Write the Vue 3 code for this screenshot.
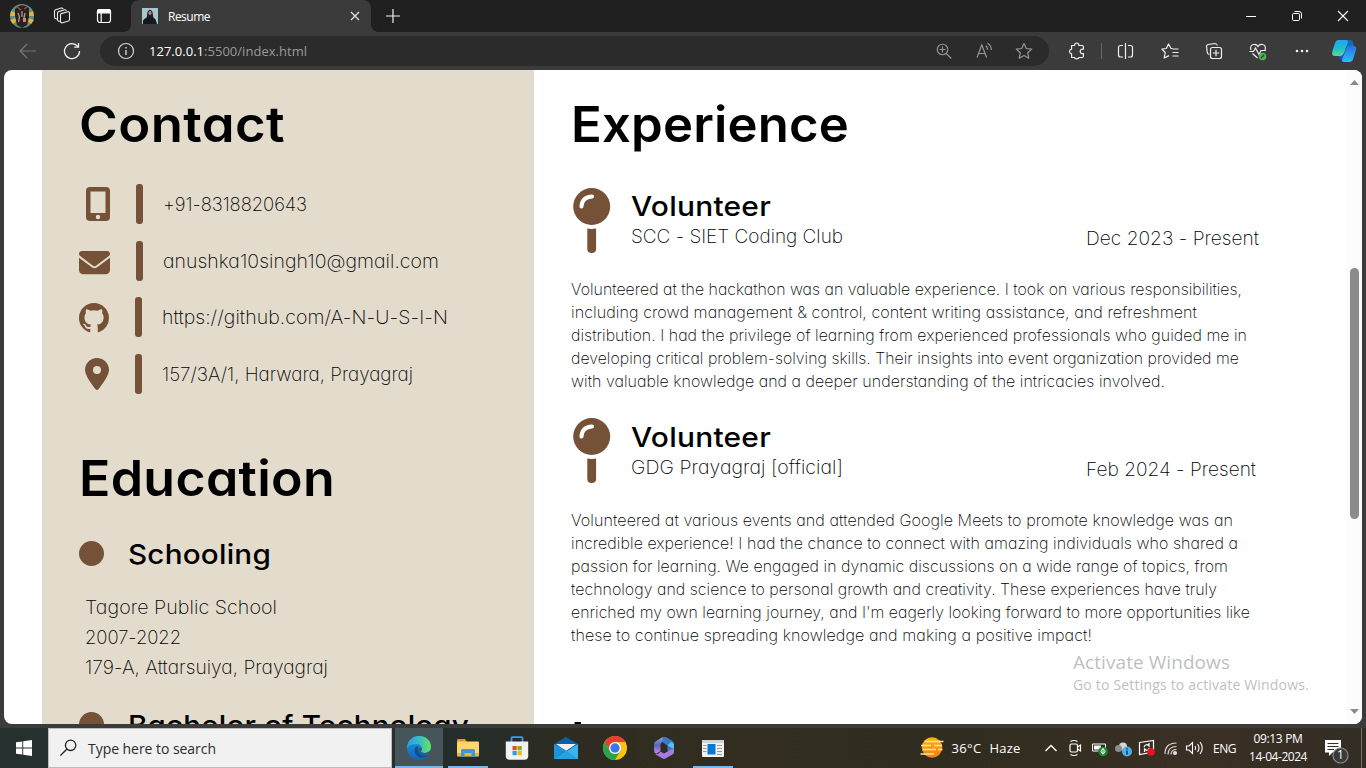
<script setup>
// Spreads the letters of a single line so that it fills the given width.
const vFit = {
  mounted(el, { value }) {
    const natural = el.getBoundingClientRect().width
    el.style.letterSpacing = (value - natural) / el.textContent.length + 'px'
  }
}

// Widens the letter shapes of a single line, with a little tracking, to the given width.
const vWiden = {
  mounted(el, { value }) {
    const natural = el.getBoundingClientRect().width
    const tracked = natural + (value - natural) * 0.15
    el.style.letterSpacing = (tracked - natural) / el.textContent.length + 'px'
    el.style.transform = `scaleX(${value / tracked})`
  }
}

const school = [
  ['Tagore Public School', 192],
  ['2007-2022', 96],
  ['179-A, Attarsuiya, Prayagraj', 243]
]

const jobs = [
  {
    org: 'SCC - SIET Coding Club',
    date: 'Dec 2023 - Present',
    dateWidth: 173,
    lines: [
      ['Volunteered at the hackathon was an valuable experience. I took on various responsibilities,', 671],
      ['including crowd management & control, content writing assistance, and refreshment', 626],
      ['distribution. I had the privilege of learning from experienced professionals who guided me in', 676],
      ['developing critical problem-solving skills. Their insights into event organization provided me', 668],
      ['with valuable knowledge and a deeper understanding of the intricacies involved.', 594]
    ]
  },
  {
    org: 'GDG Prayagraj [official]',
    date: 'Feb 2024 - Present',
    dateWidth: 170,
    lines: [
      ['Volunteered at various events and attended Google Meets to promote knowledge was an', 662],
      ['incredible experience! I had the chance to connect with amazing individuals who shared a', 667],
      ['passion for learning. We engaged in dynamic discussions on a wide range of topics, from', 657],
      ['technology and science to personal growth and creativity. These experiences have truly', 646],
      ['enriched my own learning journey, and I\'m eagerly looking forward to more opportunities like', 679],
      ['these to continue spreading knowledge and making a positive impact!', 521]
    ]
  }
]
</script>

<template>
  <div class="desktop">
    <header class="tabs">
      <svg class="avatar" width="24" height="24" viewBox="0 0 24 24">
        <circle cx="12" cy="12" r="12" fill="#5f8f86" />
        <path d="M12 12L1 7 0 12ZM12 12L0 16 3 20ZM12 12L23 7 24 12ZM12 12L24 16 21 20Z" fill="#dfb53c" />
        <path d="M5 5Q12-2 19 4L19 13 17 21 12 24 7 21 5 12Z" fill="#2a211f" />
        <path d="M7 3l4 3M17 3l-3 2" stroke="#a8463c" stroke-width="1.500" />
        <path d="M8 9l1.500 4-1 5M12 7v6M15 9l-1 5" stroke="#a79b98" stroke-width="1.300" fill="none" />
        <path d="M13 14h3v4h-3z" fill="#c98a88" />
      </svg>
      <svg class="t-spaces" width="18" height="18" viewBox="0 0 18 18" fill="none" stroke="#e8e8e8" stroke-width="1.1">
        <path d="M8.200 6.600L14.900 4.800Q16.500 4.500 16.500 6V12.500Q16.500 13.600 15.400 14L9.600 15.800Q7.800 16.200 7.500 14.600V8Q7.500 6.900 8.200 6.600Z" />
        <path d="M7.400 14.200Q4.600 14.600 4.500 12.500V6.200Q4.500 5 5.600 4.600L11.600 2.800Q13 2.500 13.400 4" />
        <path d="M4.600 11.900Q1.600 12.200 1.500 10V4.500Q1.500 3.200 2.700 2.800L8 1.100Q9.600.7 10.200 2" />
      </svg>
      <svg class="t-vert" width="16" height="16" viewBox="0 0 16 16" fill="none" stroke="#fff" stroke-width="1.200">
        <rect x="1.500" y="1.500" width="13" height="13" rx="2.500" />
        <path d="M1.500 3.500Q1.500 1.500 3.500 1.500H12.500Q14.500 1.500 14.500 3.500V5H1.500Z" fill="#fff" />
        <path d="M5.200 5V14.500" />
      </svg>
      <div class="tab">
        <svg width="16" height="16" viewBox="0 0 16 16">
          <rect width="16" height="16" fill="#a9c6d0" />
          <path d="M5.500 4Q8-.5 10.500 4L11.500 11H4.500Z" fill="#241d20" />
          <path d="M1 16V12.500Q4 9 6 9H10Q14 10 15 16Z" fill="#17191d" />
          <ellipse cx="8" cy="5" rx="1.500" ry="2" fill="#b98f84" />
        </svg>
        <span class="tab-title"><span v-fit="42" class="fit">Resume</span></span>
        <svg class="tab-x" width="10" height="10" viewBox="0 0 10 10" stroke="#e6e6e6" stroke-width="1.200"><path d="M1 1l8 8M9 1L1 9" /></svg>
      </div>
      <svg class="plus" width="14" height="14" viewBox="0 0 14 14" stroke="#f2f2f2" stroke-width="1.200"><path d="M7 0v14M0 7h14" /></svg>
      <div class="win">
        <svg width="46" height="32" viewBox="0 0 46 32" stroke="#fff"><path d="M18 16.500h10" /></svg>
        <svg width="46" height="32" viewBox="0 0 46 32" fill="none" stroke="#fff"><rect x="18.500" y="13.500" width="7" height="7" rx="1.200" /><path d="M20.500 11.500H25Q27.500 11.500 27.500 14V18.500" /></svg>
        <svg width="46" height="32" viewBox="0 0 46 32" stroke="#fff" stroke-width="1.100"><path d="M18 11l10 10M28 11L18 21" /></svg>
      </div>
    </header>

    <div class="toolbar">
      <svg class="back" width="18" height="16" viewBox="0 0 18 16" fill="none" stroke="#777" stroke-width="1.200"><path d="M17 8H1.500M8 1L1.200 8L8 15" /></svg>
      <svg class="reload" width="18" height="18" viewBox="0 0 18 18" fill="none" stroke="#f0f0f0" stroke-width="1.300"><path d="M16.500 9A7.500 7.500 0 1 1 14.800 4.400M15.500 1V5.200H11.200" /></svg>
      <div class="pill">
        <svg width="18" height="18" viewBox="0 0 18 18" fill="none" stroke="#d6d6d6" stroke-width="1.200"><circle cx="9" cy="9" r="7.500" /><path d="M9 8v5M9 5v1.500" stroke-width="1.400" /></svg>
        <span v-fit="158" class="fit url"><b>127.0.0.1</b>:5500/index.html</span>
        <div class="pill-icons">
          <svg width="40" height="30" viewBox="0 0 40 30" fill="none" stroke="#969696" stroke-width="1.100"><circle cx="18.500" cy="13.500" r="5.300" /><path d="M22.300 17.500l5 5M18.500 10.500v6M15.500 13.500h6" /></svg>
          <svg width="40" height="30" viewBox="0 0 40 30" fill="none" stroke="#969696" stroke-width="1.200"><path d="M13 21.500l4.800-12.500 4.800 12.500M14.700 17.500h6.200M21.800 9.800q1.700 1.300 1.800 4M23.500 7.300q3.800 2.200 3.800 6.800" /></svg>
          <svg width="40" height="30" viewBox="0 0 40 30" fill="none" stroke="#969696" stroke-width="1.200"><path d="M20 7.500l2.300 5 5.400.6-4 3.700 1.100 5.400-4.800-2.700-4.800 2.700 1.100-5.400-4-3.700 5.400-.6z" stroke-linejoin="round" /></svg>
        </div>
      </div>
      <div class="tools">
        <svg width="40" height="38" viewBox="0 0 40 38" fill="none" stroke="#f0f0f0" stroke-width="1.200"><path d="M14.600 13.500H17.500Q17.600 11 19.700 11T21.900 13.500H25.300Q26.400 13.500 26.400 14.600V17.200Q23.200 16.700 23.200 19.300T26.400 21.600V24Q26.400 25.500 25.300 25.500H22Q21.700 26.800 19.800 26.800T17.500 25.500H14.600V21.800Q12.500 21.500 12.500 19.500T14.600 17.200Z" stroke-linejoin="round" /></svg>
        <i class="sep"></i>
        <svg width="44" height="38" viewBox="0 0 44 38" fill="none" stroke="#f0f0f0" stroke-width="1.200"><path d="M19 13.500H16.500Q14.500 13.500 14.500 15.500V23Q14.500 25 16.500 25H19M24 13.500H26.500Q28.500 13.500 28.500 15.500V23Q28.500 25 26.500 25H24M21.500 11v16" /></svg>
        <svg width="44" height="38" viewBox="0 0 44 38" fill="none" stroke="#f0f0f0" stroke-width="1.200"><path d="M24.500 16.500H23L20.500 12l-2.200 4.500-4.400.5 3.300 3.500-1 5.500 4.800-2.400M24.500 17h6M24.500 20.500h6M24.500 24h6" stroke-linejoin="round" /></svg>
        <svg width="44" height="38" viewBox="0 0 44 38" fill="none" stroke="#f0f0f0" stroke-width="1.200"><path d="M17.500 22.500Q15.500 22.300 15.300 20.500L14.500 14.500Q14.300 13 16 12.500L23 11.500Q25 11.500 25.300 13.500" /><rect x="18.500" y="15.500" width="11" height="11" rx="2" /><path d="M24 17.800v6.500M20.800 21h6.500" /></svg>
        <svg width="44" height="38" viewBox="0 0 44 38" fill="none" stroke="#f0f0f0" stroke-width="1.200"><path d="M15 18Q13.500 13.500 17.500 12.500 20.500 12 22 14.500 23.500 12 26.500 12.500 30.500 13.500 29 18M16.500 21.500l5 4.500M13.500 19.500h4l2-3.500 3.500 6.500 2-4h5" /><circle cx="26.500" cy="24.500" r="3.800" fill="#4caf50" stroke="none" /><path d="M25 26l3-3" stroke="#174f20" /></svg>
        <svg width="44" height="38" viewBox="0 0 44 38" fill="#f0f0f0"><circle cx="17" cy="19" r="1.300" /><circle cx="22" cy="19" r="1.300" /><circle cx="27" cy="19" r="1.300" /></svg>
        <svg width="40" height="38" viewBox="0 0 40 38">
          <defs>
            <linearGradient id="cpa" x1="0" y1="0" x2="0" y2="1"><stop stop-color="#2aa2ef" /><stop offset=".5" stop-color="#16bfd0" /><stop offset="1" stop-color="#63d68c" /></linearGradient>
            <linearGradient id="cpb" x1="0" y1="0" x2="0" y2="1"><stop stop-color="#2c6fe8" /><stop offset="1" stop-color="#2bbdf4" /></linearGradient>
          </defs>
          <path d="M19 8H26Q28.500 8 29.500 11.500L30 14H26L18 16Z" fill="#0f6fb5" />
          <path d="M14 24L17 28Q18 30 21 30H24L23 23Z" fill="#1a50dc" />
          <path d="M14 8H22Q24.500 8 23.800 10.500L20 21Q18.800 24 16 24H11Q7.500 24 8.200 20L11 11Q12 8 14 8Z" fill="url(#cpa)" />
          <path d="M25 14H30Q33 14 32 18L29.500 26Q28.500 30 25.500 30H20Q17.500 30 18.300 27L22 16.500Q23 14 25 14Z" fill="url(#cpb)" />
        </svg>
      </div>
    </div>

    <main class="page">
      <aside class="side">
        <h1><span v-widen="206" class="fit">Contact</span></h1>
        <ul class="contacts">
          <li>
            <svg class="ci phone" width="24" height="34" viewBox="0 0 24 34"><path fill-rule="evenodd" fill="#755137" d="M4 0H20Q24 0 24 4V30Q24 34 20 34H4Q0 34 0 30V4Q0 0 4 0ZM4.500 4.500V26H19.500V4.500ZM12 27.800A2.200 2.200 0 1 0 12 32.200A2.200 2.200 0 1 0 12 27.800Z" /></svg>
            <i class="bar"></i><span v-widen="144" class="fit">+91-8318820643</span>
          </li>
          <li>
            <svg class="ci mail" width="31" height="31" viewBox="0 0 512 512" fill="#755137"><path d="M48 64C21.500 64 0 85.500 0 112c0 15.100 7.100 29.300 19.200 38.400L236.800 313.600c11.400 8.500 27 8.500 38.400 0L492.800 150.400c12.100-9.100 19.200-23.300 19.200-38.400c0-26.500-21.500-48-48-48H48zM0 176V384c0 35.300 28.700 64 64 64H448c35.300 0 64-28.700 64-64V176L294.400 339.200c-22.800 17.100-54 17.100-76.800 0L0 176z" /></svg>
            <i class="bar"></i><span v-widen="276" class="fit">anushka10singh10@gmail.com</span>
          </li>
          <li class="near">
            <svg class="ci git" width="30" height="30" viewBox="0 0 16 16" fill="#755137"><path d="M8 0C3.580 0 0 3.580 0 8c0 3.540 2.290 6.530 5.470 7.590.4.070.55-.17.55-.38 0-.19-.01-.82-.01-1.490-2.010.37-2.530-.49-2.690-.94-.09-.23-.48-.94-.82-1.130-.28-.15-.68-.52-.01-.53.63-.01 1.080.58 1.230.82.720 1.210 1.870.87 2.330.66.070-.52.280-.87.510-1.070-1.780-.2-3.640-.89-3.640-3.950 0-.87.310-1.590.820-2.150-.08-.2-.36-1.020.080-2.120 0 0 .67-.21 2.200.820.640-.18 1.320-.27 2-.27s1.360.090 2 .27c1.530-1.040 2.200-.82 2.200-.82.440 1.100.160 1.920.080 2.120.51.560.820 1.270.820 2.150 0 3.070-1.870 3.750-3.650 3.950.29.250.54.730.54 1.480 0 1.070-.01 1.930-.01 2.200 0 .21.150.46.550.38A8.010 8.010 0 0 0 16 8c0-4.420-3.580-8-8-8z" /></svg>
            <i class="bar"></i><span v-widen="286" class="fit">https://github.com/A-N-U-S-I-N</span>
          </li>
          <li class="near">
            <svg class="ci pin-i" width="24" height="32" viewBox="0 0 384 512" fill="#755137"><path d="M215.700 499.200C267 435 384 279.400 384 192C384 86 298 0 192 0S0 86 0 192c0 87.400 117 243 168.300 307.200c12.300 15.300 35.100 15.300 47.400 0zM192 128a64 64 0 1 1 0 128 64 64 0 1 1 0-128z" /></svg>
            <i class="bar"></i><span v-widen="251" class="fit">157/3A/1, Harwara, Prayagraj</span>
          </li>
        </ul>
        <h1 class="edu"><span v-widen="256" class="fit">Education</span></h1>
        <h2><i class="dot"></i><span v-widen="143" class="fit">Schooling</span></h2>
        <div class="school">
          <p v-for="l in school" :key="l[0]"><span v-widen="l[1]" class="fit">{{ l[0] }}</span></p>
        </div>
        <h2><i class="dot"></i><span v-widen="341" class="fit">Bachelor of Technology</span></h2>
      </aside>

      <section class="main">
        <h1><span v-widen="278" class="fit">Experience</span></h1>
        <article v-for="j in jobs" :key="j.org">
          <div class="head">
            <svg class="pin" width="38" height="66" viewBox="0 0 38 66">
              <circle cx="18.700" cy="18.500" r="18.500" fill="#755137" />
              <path d="M8.500 18.500Q9 9 19 8.500" fill="none" stroke="#fff" stroke-width="4" stroke-linecap="round" />
              <path d="M14.300 40.500Q18.700 41.300 23.100 40.500V61Q23.100 65 18.700 65T14.300 61Z" fill="#755137" />
            </svg>
            <div class="role">
              <h3><span v-widen="140" class="fit">Volunteer</span></h3>
              <p><span v-widen="212" class="fit">{{ j.org }}</span></p>
            </div>
            <span class="date"><span v-widen="j.dateWidth" class="fit">{{ j.date }}</span></span>
          </div>
          <p v-for="l in j.lines" :key="l[0]" class="line"><span v-widen="l[1]" class="fit">{{ l[0] }}</span></p>
        </article>
        <h1 class="next">I</h1>
      </section>

      <div class="scroll">
        <svg width="15" height="24" viewBox="0 0 15 24"><path d="M3 15L7.500 10L12 15Z" fill="#8b8b8b" /></svg>
        <i class="thumb"></i>
        <svg width="15" height="24" viewBox="0 0 15 24"><path d="M3 9L7.500 14L12 9Z" fill="#8b8b8b" /></svg>
      </div>
    </main>

    <footer class="taskbar">
      <svg class="start" width="48" height="40" viewBox="0 0 48 40" fill="#fff"><path d="M16 14.300L22.300 13.400V19.500H16ZM23.200 13.300L32 12V19.500H23.200ZM16 20.400H22.300V26.600L16 25.700ZM23.200 20.400H32V28L23.200 26.700Z" /></svg>
      <div class="search">
        <svg width="18" height="18" viewBox="0 0 18 18" fill="none" stroke="#222" stroke-width="1.300"><circle cx="10.600" cy="6.300" r="5.200" /><path d="M7 10L.4 16.600" /></svg>
        <span v-fit="128" class="fit">Type here to search</span>
      </div>
      <div class="apps">
        <div class="app active">
          <svg width="24" height="24" viewBox="0 0 24 24">
            <defs>
              <linearGradient id="ea" x1="0" y1=".3" x2="1" y2=".3"><stop stop-color="#2c9fe0" /><stop offset=".55" stop-color="#35c1c1" /><stop offset="1" stop-color="#6ee15a" /></linearGradient>
              <linearGradient id="eb" x1="0" y1="0" x2="0" y2="1"><stop stop-color="#1b9de2" /><stop offset="1" stop-color="#1263ba" /></linearGradient>
            </defs>
            <circle cx="12" cy="12" r="12" fill="url(#eb)" />
            <path d="M0 11C1 4 6 0 12 0C19 0 24 5 24 10.500C24 14.500 21 17 17.500 17C14.500 17 13.500 15.800 14.300 14.500C16 11.500 13.500 8 9.500 8C5 8 1.500 9.500 0 12Z" fill="url(#ea)" />
            <path d="M9 10.500C6 14 8 20 13 21.500C17 22.500 20 21 22 18.500C17 21 11 18 11.500 12.500Q11.500 9.500 9 10.500Z" fill="#144f94" />
            <path d="M14.300 14.500C13.500 15.800 14.500 17 17.500 17Q21 17 24 14.500L24.500 18.500L22 18.200C16 19.500 12 16.500 12 13Q12.500 11 14.800 11.500Q15.200 13 14.300 14.500Z" fill="#46555a" />
          </svg>
        </div>
        <div class="app open">
          <svg width="22" height="18" viewBox="0 0 22 18"><path d="M0 1Q0 0 1 0H8L10 3H0Z" fill="#e19a13" /><rect y="2.500" width="22" height="15" rx="1" fill="#ffd667" /><path d="M0 14H22V17H0Z" fill="#f0b429" /><path d="M4 18V11.500Q4 10 5.500 10H16.500Q18 10 18 11.500V18H14.500V14H7.500V18Z" fill="#3c97dc" /></svg>
        </div>
        <div class="app">
          <svg width="24" height="24" viewBox="0 0 24 24"><path d="M6.500 6V2.200Q6.500 1.200 7.500 1.200H16.500Q17.500 1.200 17.500 2.200V6" fill="none" stroke="#2aa7e4" stroke-width="1.800" /><path d="M.8 5.500H23.200V20Q23.200 23.800 19.500 23.800H4.500Q.8 23.800.8 20Z" fill="#f2f2f2" /><path d="M7.500 10h4.200v4.200H7.500z" fill="#e74c23" /><path d="M12.500 10h4.200v4.200h-4.200z" fill="#7db505" /><path d="M7.500 15h4.200v4.200H7.500z" fill="#24a2e8" /><path d="M12.500 15h4.200v4.200h-4.200z" fill="#f9b500" /></svg>
        </div>
        <div class="app">
          <svg width="24" height="24" viewBox="0 0 24 24"><path d="M0 8L12 1L24 8V12H0Z" fill="#0e5ea5" /><path d="M2 8H22L12 15Z" fill="#f1f1f1" /><path d="M0 8L12 14.500L0 23Z" fill="#1c93dc" /><path d="M24 8L0 23H24Z" fill="#33b5f0" /><path d="M0 23L12 14.500L24 23Z" fill="#23a3e6" /></svg>
        </div>
        <div class="app">
          <svg width="24" height="24" viewBox="0 0 24 24"><circle cx="12" cy="12" r="12" fill="#fbc116" /><path d="M1.600 6A12 12 0 0 1 22.400 6H12L7 15Z" fill="#e5402f" /><path d="M1.600 6A12 12 0 0 0 12 24L17.200 15L12 17L7 15Z" fill="#2ba24c" /><circle cx="12" cy="12" r="6" fill="#fff" /><circle cx="12" cy="12" r="4.700" fill="#3b78e7" /></svg>
        </div>
        <div class="app">
          <svg width="24" height="24" viewBox="0 0 24 24">
            <defs><linearGradient id="ma" x1="0" y1="0" x2="0" y2="1"><stop stop-color="#93a6e6" /><stop offset=".5" stop-color="#5866bb" /><stop offset="1" stop-color="#c78ae8" /></linearGradient></defs>
            <path d="M10 1.500Q12 .5 14 1.500L11 5Q8.500 6.500 8.500 9V15L4.500 17.500Q2 17 2 14.500V8.500Q2 6.500 3.500 5.500Z" fill="url(#ma)" />
            <path d="M11 1L14 1L20.500 5Q22 6 22 8V15Q20 17 15.500 15V9.500L10 6Z" fill="#3c79c9" />
            <path d="M22 13V16Q22 17.500 20.500 18.500L13.500 22.500Q12 23.300 10.500 22.500L3 18Q7 18.500 8.500 15.500L11 17Q12 17.500 13 17L19 13.500Z" fill="#a77bdd" />
            <path d="M15.500 9.500L22 13V8L19 6Z" fill="#52c3ea" />
          </svg>
        </div>
        <div class="app open">
          <svg width="22" height="17" viewBox="0 0 22 17"><rect width="22" height="17" rx="1" fill="#f2f2f2" /><path d="M0 0H22V3H0Z" fill="#d0d4d8" /><path d="M5.500 4h8v10.500h-8z" fill="#0b78d4" /><path d="M1 5.500h3.500M1 8.500h3.500M1 11.500h3.500M15 5.500h5M15 8.500h5M15 11.500h5M15 14.500h5" stroke="#999" /></svg>
        </div>
      </div>
      <div class="tray">
        <svg class="haze" width="24" height="22" viewBox="0 0 24 22">
          <defs><linearGradient id="hz" x1="0" y1="0" x2="0" y2="1"><stop stop-color="#fdb515" /><stop offset="1" stop-color="#f07e12" /></linearGradient></defs>
          <circle cx="12" cy="10.500" r="10.300" fill="url(#hz)" />
          <path d="M5 4.500H23.500M1 8.500H11M14 8.500H22M3 12.500H16M18 12.500H22.500M.5 17H14" stroke="#ffe2a4" stroke-width="1.500" />
        </svg>
        <span class="temp"><span v-fit="30" class="fit">36°C</span></span>
        <span class="haze-t"><span v-fit="31" class="fit">Haze</span></span>
        <svg class="chev" width="14" height="10" viewBox="0 0 14 10" fill="none" stroke="#fff" stroke-width="1.300"><path d="M1.500 8L7 2.500L12.500 8" /></svg>
        <svg class="ti" width="24" height="24" viewBox="0 0 24 24" fill="none" stroke="#fff" stroke-width="1.200"><rect x="7" y="8" width="7.500" height="8" rx="1.500" /><path d="M14.500 11l3-2v6l-3-2M7.500 5.500q3.500-2 7 0M7.500 18.500q3.500 2 7 0" /></svg>
        <svg class="ti" width="24" height="24" viewBox="0 0 24 24"><path d="M5.500 8h13v7h-13z" fill="none" stroke="#fff" /><path d="M7 9.500h7v4H7z" fill="#fff" /><circle cx="16" cy="15.500" r="4.800" fill="#138a2c" /><path d="M16 12.500q-4 4 0 5q4-1 0-5v6" stroke="#fff" fill="none" /></svg>
        <svg class="ti" width="24" height="24" viewBox="0 0 24 24"><circle cx="12" cy="10.500" r="4" fill="#d6d6d6" /><circle cx="7.500" cy="12.500" r="3.500" fill="#8b8b8b" /><circle cx="16" cy="15.500" r="5" fill="#4bb1ed" /><path d="M16 12.200v1.300M16 14.500v4" stroke="#10324a" stroke-width="1.500" /></svg>
        <svg class="ti" width="24" height="24" viewBox="0 0 24 24"><path d="M4.500 6.500L18.500 4.500V16L4.500 18.500Z" fill="none" stroke="#fff" stroke-width="1.200" /><path d="M9 11q2-4 5-1V7M14.500 12q-2 4-5 1V16" fill="none" stroke="#fff" stroke-width="1.200" /><circle cx="16" cy="16" r="3.800" fill="#e81123" /></svg>
        <svg class="ti" width="24" height="24" viewBox="0 0 24 24" fill="none" stroke="#ddd" stroke-width="1.200"><path d="M6 18Q6 7 17.500 7M9 18.500Q9 10.500 17.500 10.500M12 18.500Q12 13.500 17.500 13.500" /><circle cx="16" cy="17" r="1.500" fill="#ddd" /></svg>
        <svg class="ti" width="24" height="24" viewBox="0 0 24 24" fill="none" stroke="#fff" stroke-width="1.100"><path d="M3.500 10H6L9.500 6.500V17.500L6 14H3.500ZM12 10q1.500 2 0 4M14.500 8q3 4 0 8M17 6q4.500 6 0 12" /></svg>
        <span class="eng"><span v-fit="23" class="fit">ENG</span></span>
        <div class="clock">
          <div><span v-fit="49" class="fit">09:13 PM</span></div>
          <div><span v-fit="58" class="fit">14-04-2024</span></div>
        </div>
        <div class="note">
          <svg width="26" height="26" viewBox="0 0 26 26"><path d="M1 1H17V13.500H8.500L5 17V13.500H1Z" fill="#fff" /><path d="M3.500 4.500H14.500M3.500 7.500H14.500M3.500 10.500H10" stroke="#35302a" /><circle cx="16.500" cy="16.500" r="7.500" fill="#3a3a3a" stroke="#8a8a8a" stroke-width="1.200" /></svg>
          <span class="count">1</span>
        </div>
        <i class="edge"></i>
      </div>
    </footer>

    <div class="watermark">
      <div class="w1"><span v-fit="157" class="fit">Activate Windows</span></div>
      <div class="w2"><span v-fit="236" class="fit">Go to Settings to activate Windows.</span></div>
    </div>
  </div>
</template>

<style>
body { background: #3b3b3b; overflow: hidden; }
</style>

<style scoped>
* { box-sizing: border-box; margin: 0; padding: 0; }
svg { display: block; flex: none; }
i { display: block; }
.fit { display: inline-block; justify-self: start; white-space: pre; transform-origin: 0 50%; }
.desktop { position: relative; width: 1366px; height: 768px; overflow: hidden; display: flex; flex-direction: column; background: #3b3b3b; font-family: "Open Sans", "Noto Sans", sans-serif; }

.tabs { height: 32px; flex: none; background: #202020; display: flex; align-items: center; color: #fff; font-size: 12px; }
.avatar { margin-left: 10px; }
.t-spaces { margin-left: 19px; }
.t-vert { margin-left: 25px; }
.tab { position: relative; width: 240px; height: 32px; margin-left: 19px; border-radius: 8px 8px 0 0; background: #3b3b3b; display: flex; align-items: center; padding-left: 11px; }
.tab::before, .tab::after { content: ""; position: absolute; bottom: 0; width: 7px; height: 7px; }
.tab::before { left: -7px; background: radial-gradient(circle at 0 0, #202020 6.500px, #3b3b3b 7px); }
.tab::after { right: -7px; background: radial-gradient(circle at 100% 0, #202020 6.500px, #3b3b3b 7px); }
.tab-title { margin-left: 10px; width: 172px; }
.tab-x { margin-left: 10px; }
.plus { margin-left: 15px; }
.win { margin-left: auto; display: flex; }

.toolbar { height: 38px; flex: none; display: flex; align-items: center; }
.back { margin-left: 19px; }
.reload { margin-left: 26px; }
.pill { width: 949px; height: 30px; margin-left: 19px; border-radius: 15px; background: #2b2b2b; display: flex; align-items: center; padding-left: 17px; }
.url { margin-left: 14px; font-size: 13px; color: #9a9a9a; }
.url b { color: #fff; font-weight: 500; }
.pill-icons { margin-left: auto; margin-right: 5px; display: flex; }
.tools { display: flex; align-items: center; margin-left: 8px; }
.sep { width: 1px; height: 16px; margin: 0 2px 0 4px; background: #666; }

.page { height: 654px; width: 1358px; flex: none; margin-left: 4px; background: #fff; border-radius: 8px; overflow: hidden; display: flex; font-family: Inter, "Open Sans", sans-serif; font-feature-settings: "cv11"; color: #000; font-weight: 250; }
h1 { font-size: 49px; line-height: 73px; height: 73px; font-weight: 600; white-space: nowrap; }
h2 { display: flex; align-items: center; height: 46px; font-size: 27.500px; font-weight: 500; white-space: nowrap; }
.side { width: 492px; height: 654px; margin-left: 38px; padding: 18px 0 0 37px; background: #e3dccd; overflow: hidden; flex: none; }
.contacts { list-style: none; margin-top: 23px; display: flex; flex-direction: column; gap: 16.700px; font-size: 19px; line-height: 42px; }
.contacts li { display: grid; grid-template-columns: 57px 27px auto; grid-template-rows: 40px; align-items: center; height: 40px; }
.contacts .near { grid-template-columns: 56px 27px auto; }
.contacts .fit { height: 40px; }
.phone { margin-left: 7px; }
.mail { margin-top: 3px; }
.git { margin-top: 2px; }
.pin-i { margin-left: 6px; }
.bar { width: 7px; height: 40px; border-radius: 3px; background: #755137; }
.edu { margin-top: 48px; }
.dot { width: 25px; height: 25px; border-radius: 50%; background: #755137; margin: 0 24px 1px 0; }
.edu + h2 { margin-top: 16px; }
.school { margin: 16px 0 19px 6px; font-size: 19px; line-height: 30px; font-weight: 200; }
.school p, .line { white-space: nowrap; }

.main { width: 809px; flex: none; padding: 18px 0 0 37px; height: 654px; overflow: hidden; }
.main article { margin-top: 25.500px; }
.main h1 + article { margin-top: 27px; }
.head { height: 90px; display: flex; align-items: flex-start; font-size: 19px; }
.pin { margin: -0.100px 0 0 2px; }
.role { margin-left: 20px; width: 455px; }
.role h3 { font-size: 27.500px; line-height: 32px; height: 32px; margin-top: 2px; font-weight: 500; }
.role p { line-height: 30px; font-weight: 200; }
.date { margin-top: 36px; line-height: 30px; font-weight: 200; }
.line { font-size: 15.500px; line-height: 23px; height: 23px; font-weight: 220; }
.next { margin-top: 57px; }

.scroll { margin-left: auto; width: 15px; height: 654px; background: #fcfcfc; display: flex; flex-direction: column; }
.thumb { width: 9px; height: 251px; border-radius: 4.500px; background: #8b8b8b; margin: 174px auto auto 3px; }

.taskbar { height: 40px; margin-top: 4px; flex: none; display: flex; background: linear-gradient(90deg, #26312f 0, #27302e 400px, #232d2c 450px, #2d2c22 560px, #322d20 720px, #302c20 950px, #3a2f23 1200px, #332d25 1366px); color: #fff; }
.search { width: 344px; height: 40px; background: #f1f1f1; border: 1px solid #bcbcbc; display: flex; align-items: center; padding-left: 11px; color: #2b2b2b; font-size: 14px; }
.search .fit { margin-left: 10px; }
.apps { display: flex; gap: 1px; margin-left: 3px; }
.app { width: 48px; height: 40px; display: flex; align-items: center; justify-content: center; }
.active { background: linear-gradient(#46555a 38px, #76b9ed 38px); }
.open { background: linear-gradient(#76b9ed, #76b9ed) 50% 100% / 40px 2px no-repeat; }
.tray { margin-left: auto; display: flex; align-items: center; font-size: 13px; }
.temp { margin-left: 8px; width: 38px; }
.haze-t { width: 54px; }
.chev { width: 14px; margin-right: 6px; }
.ti { margin-left: -0.100px; }
.eng { margin-left: 6px; width: 36px; font-size: 12px; }
.clock { width: 58px; margin-top: -1px; font-size: 12px; line-height: 18px; text-align: center; }
.note { position: relative; margin: 7px 0 0 17px; width: 26px; }
.count { position: absolute; left: 13px; top: 8px; font-size: 12px; line-height: 16px; }
.edge { width: 1px; height: 40px; background: #77736d; margin: 0 4px 0 11px; }

.watermark { position: absolute; left: 1073px; top: 650px; color: #bfbfbf; }
.w1 { font-size: 19px; line-height: 24px; height: 24px; }
.w2 { font-size: 14px; line-height: 22px; }
</style>
